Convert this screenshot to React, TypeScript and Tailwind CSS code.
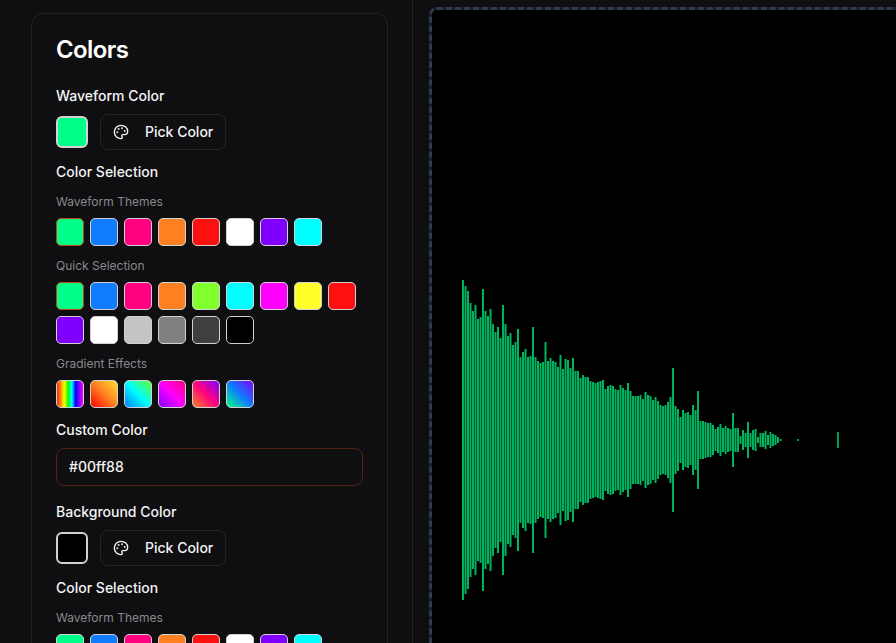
import { Palette } from "lucide-react";

const themes = ["bg-[#00ff88]", "bg-[#0f7bff]", "bg-[#ff0080]", "bg-[#ff8020]", "bg-[#ff1010]", "bg-white", "bg-[#8000ff]", "bg-[#00ffff]"];
const quick = [
  "bg-[#00ff88]", "bg-[#0f7bff]", "bg-[#ff0080]", "bg-[#ff8020]", "bg-[#80ff2a]", "bg-[#00ffff]", "bg-[#ff00ff]", "bg-[#ffff2a]", "bg-[#ff1010]",
  "bg-[#8000ff]", "bg-white", "bg-[#c4c4c4]", "bg-[#808080]", "bg-[#404040]", "bg-black",
];
const gradients = [
  "bg-[linear-gradient(90deg,#ff2020,#ff9000,#ffff00,#00ff00,#00ffff,#0000ff,#8000ff,#ff00ff)]",
  "bg-[linear-gradient(45deg,#ff0000,#ff8020,#ffe030)]",
  "bg-[linear-gradient(45deg,#0080ff,#00ffff,#60ff30)]",
  "bg-[linear-gradient(45deg,#8000ff,#ff00ff,#ff0080)]",
  "bg-[linear-gradient(45deg,#ff8020,#ff0080,#8000ff)]",
  "bg-[linear-gradient(45deg,#00ff88,#0f7bff,#8000ff)]",
];

// half heights of the bars, read off the picture, left to right
const bars = [
  160, 154, 149, 137, 129, 135, 121, 123, 151, 129, 124, 131, 116, 108, 113, 102, 135, 116, 104, 107, 95, 98, 111, 83, 88, 91, 83, 84, 113, 83, 79, 77, 78, 98, 79, 82, 79, 78, 73, 85, 71, 81, 80, 72, 82, 69, 69, 62, 65,
  63, 63, 59, 58, 57, 58, 59, 60, 51, 54, 55, 54, 51, 50, 55, 52, 50, 57, 49, 44, 44, 44, 45, 41, 48, 45, 44, 40, 43, 39, 35, 34, 35, 38, 43, 72, 34, 31, 23, 30, 27, 28, 25, 35, 30, 49, 19, 19, 18, 17, 17, 15, 11, 13, 16, 12, 14, 12, 11, 27, 12, 12, 4, 10, 7, 18, 7, 10, 11, 3, 7, 7, 9, 5, 8, 6, 5, 3, 1,
];

function Swatch({ color, selected }: { color: string; selected?: boolean }) {
  return (
    <div className={`h-7 w-7 rounded-[5px] border ${selected ? "border-[#c8401a]" : "border-[#d0d2d6]"} ${color}`} />
  );
}

function Section({ label, colors, selectFirst }: { label: string; colors: string[]; selectFirst?: boolean }) {
  return (
    <div className="mt-3">
      <p className="text-xs leading-4 text-[#8a888d]">{label}</p>
      <div className="mt-2 flex w-[320px] flex-wrap gap-1.5">
        {colors.map((c, i) => (
          <Swatch key={i} color={c} selected={selectFirst && i === 0} />
        ))}
      </div>
    </div>
  );
}

function ColorRow({ color }: { color: string }) {
  return (
    <div className="mt-2 flex items-center gap-3">
      <div className={`h-8 w-8 rounded-md border-2 border-[#d0d2d6] ${color}`} />
      <button className="flex h-9 w-[126px] items-center rounded-lg border border-[#242326] pl-3 text-sm font-[450] text-[#f4f4f5]">
        <Palette className="h-4 w-4" />
        <span className="ml-4">Pick Color</span>
      </button>
    </div>
  );
}

function Waveform() {
  return (
    <svg className="block" width="600" height="860" viewBox="432 10 600 860">
      {bars.map((h, i) => (
        <rect key={i} x={462 + i * 2.5} y={440 - h} width="2" height={h * 2} fill="#00ff88" opacity="0.7" />
      ))}
      <rect x="797" y="439" width="2" height="2" fill="#00ff88" opacity="0.6" />
      <rect x="837" y="432" width="2" height="16" fill="#00ff88" opacity="0.6" />
    </svg>
  );
}

export default function App() {
  return (
    <div className="flex h-screen overflow-hidden bg-[#0f0e10] text-white [font-family:Inter,sans-serif]">
      <div className="w-[413px] shrink-0 border-r border-[#232225] pl-[31px] pt-[13px]">
        <div className="h-[800px] w-[357px] rounded-xl border border-[#232225] p-6">
          <h2 className="text-2xl leading-none font-semibold tracking-[-0.6px]">Colors</h2>

          <p className="mt-6 text-sm leading-5 font-[450] text-[#f4f4f5]">Waveform Color</p>
          <ColorRow color="bg-[#00ff88]" />
          <p className="mt-3 text-sm leading-5 font-[450] text-[#f4f4f5]">Color Selection</p>
          <Section label="Waveform Themes" colors={themes} selectFirst />
          <Section label="Quick Selection" colors={quick} selectFirst />
          <Section label="Gradient Effects" colors={gradients} />

          <p className="mt-3 text-sm leading-5 font-medium text-[#f4f4f5]">Custom Color</p>
          <div className="mt-2 flex h-[38px] items-center rounded-lg border border-[#50220f] px-3 text-sm font-[450] text-[#f4f4f5]">#00ff88</div>

          <p className="mt-4 text-sm leading-5 font-[450] text-[#f4f4f5]">Background Color</p>
          <ColorRow color="bg-black" />
          <p className="mt-3 text-sm leading-5 font-[450] text-[#f4f4f5]">Color Selection</p>
          <Section label="Waveform Themes" colors={themes} />
        </div>
      </div>
      <div className="pl-4 pt-[7px]">
        <div className="w-[606px] rounded-lg border-[3px] border-dashed border-[#303a4e] bg-[#171c28]">
          <div className="overflow-hidden rounded-[5px] bg-black">
            <Waveform />
          </div>
        </div>
      </div>
    </div>
  );
}
